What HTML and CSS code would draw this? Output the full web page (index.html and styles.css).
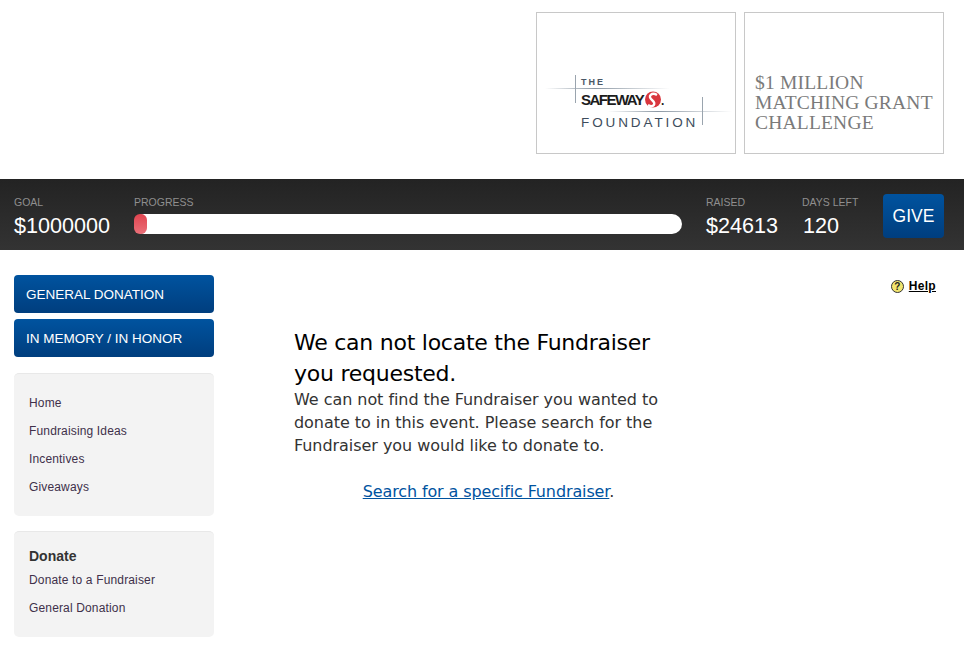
FILE: index.html
```html
<!DOCTYPE html>
<html lang="en">
<head>
    <meta charset="UTF-8">
    <meta name="viewport" content="width=device-width, initial-scale=1.0">
    <title>Fundraiser not found</title>
    <link rel="stylesheet" href="styles.css">
</head>
<body>
    <header class="logos">
        <div class="logo-box">
            <svg class="logo-art" width="198" height="140" viewBox="0 0 198 140">
                <defs>
                    <linearGradient id="lineFade" x1="0" x2="1" y1="0" y2="0">
                        <stop offset="0" stop-color="#8b97a3" stop-opacity="0"/>
                        <stop offset="0.4" stop-color="#8b97a3"/>
                        <stop offset="1" stop-color="#8b97a3" stop-opacity="0"/>
                    </linearGradient>
                </defs>
                <rect x="8" y="75" width="125" height="1" fill="url(#lineFade)"/>
                <rect x="38" y="62" width="1" height="28" fill="#9aa4ae"/>
                <rect x="71" y="98" width="124" height="1" fill="url(#lineFade)"/>
                <rect x="165" y="84" width="1" height="28" fill="#9aa4ae"/>
                <text class="logo-the" x="44" y="72">THE</text>
                <text class="logo-safeway" x="44" y="92">SAFEWAY</text>
                <circle cx="116" cy="86.5" r="8" fill="#d9363e"/>
                <path d="M120 82 C115 79 110 83 115 87 C120 91 116 95 111 92" fill="none" stroke="#fff" stroke-width="2.4"/>
                <text class="logo-dot" x="124" y="92">.</text>
                <text class="logo-foundation" x="44" y="114">FOUNDATION</text>
            </svg>
        </div>
        <div class="logo-box">
            <svg class="logo-art" width="198" height="140" viewBox="0 0 198 140">
                <text class="logo-grant" x="10" y="76">$1 MILLION</text>
                <text class="logo-grant" x="10" y="96">MATCHING GRANT</text>
                <text class="logo-grant" x="10" y="116">CHALLENGE</text>
            </svg>
        </div>
    </header>

    <section class="stats-bar">
        <div class="stat stat-goal">
            <span class="stat-label">GOAL</span>
            <span class="stat-value">$1000000</span>
        </div>
        <div class="stat stat-progress">
            <span class="stat-label">PROGRESS</span>
            <div class="progress-track"><div class="progress-fill"></div></div>
        </div>
        <div class="stat stat-raised">
            <span class="stat-label">RAISED</span>
            <span class="stat-value">$24613</span>
        </div>
        <div class="stat stat-days">
            <span class="stat-label">DAYS LEFT</span>
            <span class="stat-value">120</span>
        </div>
        <a class="give-btn" href="#">GIVE</a>
    </section>

    <div class="page">
        <aside class="sidebar">
            <a class="side-btn" href="#">GENERAL DONATION</a>
            <a class="side-btn" href="#">IN MEMORY / IN HONOR</a>
            <nav class="side-panel">
                <a href="#">Home</a>
                <a href="#">Fundraising Ideas</a>
                <a href="#">Incentives</a>
                <a href="#">Giveaways</a>
            </nav>
            <nav class="side-panel side-panel-donate">
                <h4>Donate</h4>
                <a href="#">Donate to a Fundraiser</a>
                <a href="#">General Donation</a>
            </nav>
        </aside>

        <main class="content">
            <div class="help-row">
                <span class="help-icon">?</span>
                <a class="help-link" href="#">Help</a>
            </div>
            <div class="message">
                <h2>We can not locate the Fundraiser you requested.</h2>
                <p>We can not find the Fundraiser you wanted to donate to in this event. Please search for the Fundraiser you would like to donate to.</p>
                <p class="search-line"><a href="#">Search for a specific Fundraiser</a>.</p>
            </div>
        </main>
    </div>
</body>
</html>
```

FILE: styles.css
```css
body {
    margin: 0;
    background-color: #fff;
    font-family: "Liberation Sans", Arial, sans-serif;
    color: #333;
    overflow: hidden;
}
a {
    text-decoration: none;
}

/* logos */
.logos {
    display: flex;
    justify-content: flex-end;
    gap: 8px;
    padding: 12px 20px 25px 0;
}
.logo-box {
    width: 198px;
    height: 140px;
    border: 1px solid #c8c8c8;
}
.logo-art {
    display: block;
}
.logo-the {
    font: bold 9px "Liberation Sans", sans-serif;
    letter-spacing: 2px;
    fill: #4a5866;
}
.logo-safeway {
    font: bold 15px "Liberation Sans", sans-serif;
    letter-spacing: -1.5px;
    fill: #1c1c1c;
}
.logo-dot {
    font: bold 12px "Liberation Sans", sans-serif;
    fill: #1c1c1c;
}
.logo-foundation {
    font: 13.5px "Liberation Sans", sans-serif;
    letter-spacing: 2.9px;
    fill: #3d4c5c;
}
.logo-grant {
    font: 19.5px "Liberation Serif", serif;
    letter-spacing: 0.2px;
    fill: #7a7a7a;
}

/* stats bar */
.stats-bar {
    display: flex;
    height: 71px;
    box-sizing: border-box;
    padding: 15px 20px 0 14px;
    background: linear-gradient(to bottom, #232323, #333333);
}
.stat {
    display: flex;
    flex-direction: column;
}
.stat-label {
    font-size: 10.5px;
    line-height: 16px;
    color: #8f8f8f;
}
.stat-value {
    font-size: 21.6px;
    line-height: 28px;
    margin-top: 2px;
    color: #fff;
}
.stat-goal {
    width: 120px;
}
.stat-progress {
    width: 572px;
}
.stat-raised {
    width: 96px;
}
.stat-days {
    width: 81px;
}
.stat-days .stat-value {
    padding-left: 1px;
}
.progress-track {
    width: 548px;
    height: 20px;
    margin-top: 4px;
    background-color: #fff;
    border-radius: 10px;
}
.progress-fill {
    width: 13px;
    height: 20px;
    background: linear-gradient(to bottom, #e0444f, #ea7079);
    border-radius: 6px;
}
.give-btn {
    width: 61px;
    height: 44px;
    color: #fff;
    font-size: 17.5px;
    line-height: 44px;
    text-align: center;
    border-radius: 4px;
    background: linear-gradient(to bottom, #00539f, #003e7e);
}

/* page */
.page {
    display: flex;
    padding: 25px 20px 0 14px;
}
.sidebar {
    width: 200px;
    flex-shrink: 0;
}
.side-btn {
    display: block;
    height: 38px;
    padding-left: 12px;
    margin-bottom: 6px;
    color: #fff;
    font-size: 13.5px;
    line-height: 39px;
    border-radius: 4px;
    background: linear-gradient(to bottom, #00539f, #003e7e);
}
.side-panel {
    margin-top: 16px;
    padding: 15px;
    height: 112px;
    background-color: #f3f3f3;
    border-radius: 5px;
    border-top: 1px solid #e8e8e8;
}
.side-panel a {
    display: block;
    font-size: 12px;
    line-height: 28px;
    letter-spacing: 0.15px;
    color: #40304a;
}
.side-panel-donate {
    margin-top: 15px;
    height: 75px;
}
.side-panel-donate h4 {
    margin: 0;
    font-size: 14px;
    line-height: 18px;
    color: #333;
}
.side-panel-donate a:first-of-type {
    margin-top: 1px;
}

/* main */
.content {
    flex: 1;
}
.help-row {
    display: flex;
    justify-content: flex-end;
    align-items: center;
    gap: 5px;
    height: 22px;
    margin-right: 8px;
}
.help-icon {
    width: 13px;
    height: 13px;
    box-sizing: border-box;
    border: 1px solid #333;
    border-radius: 50%;
    background-color: #f2e56f;
    color: #222;
    font-size: 10px;
    font-weight: bold;
    line-height: 11px;
    text-align: center;
}
.help-link {
    font-size: 12px;
    font-weight: bold;
    letter-spacing: 0.3px;
    color: #000;
    text-decoration: underline;
}
.message {
    width: 376px;
    margin: 30px 0 0 80px;
    font-family: "DejaVu Sans", Tahoma, sans-serif;
}
.message h2 {
    margin: 0 0 -1px;
    font-size: 22px;
    font-weight: normal;
    letter-spacing: -0.25px;
    line-height: 31px;
    color: #000;
}
.message p {
    margin: 0;
    font-size: 16px;
    letter-spacing: -0.05px;
    line-height: 23px;
    color: #333;
}
.message .search-line {
    margin-top: 23px;
    padding-left: 13px;
    letter-spacing: -0.12px;
    text-align: center;
}
.search-line a {
    color: #00539f;
    text-decoration: underline;
}
```
